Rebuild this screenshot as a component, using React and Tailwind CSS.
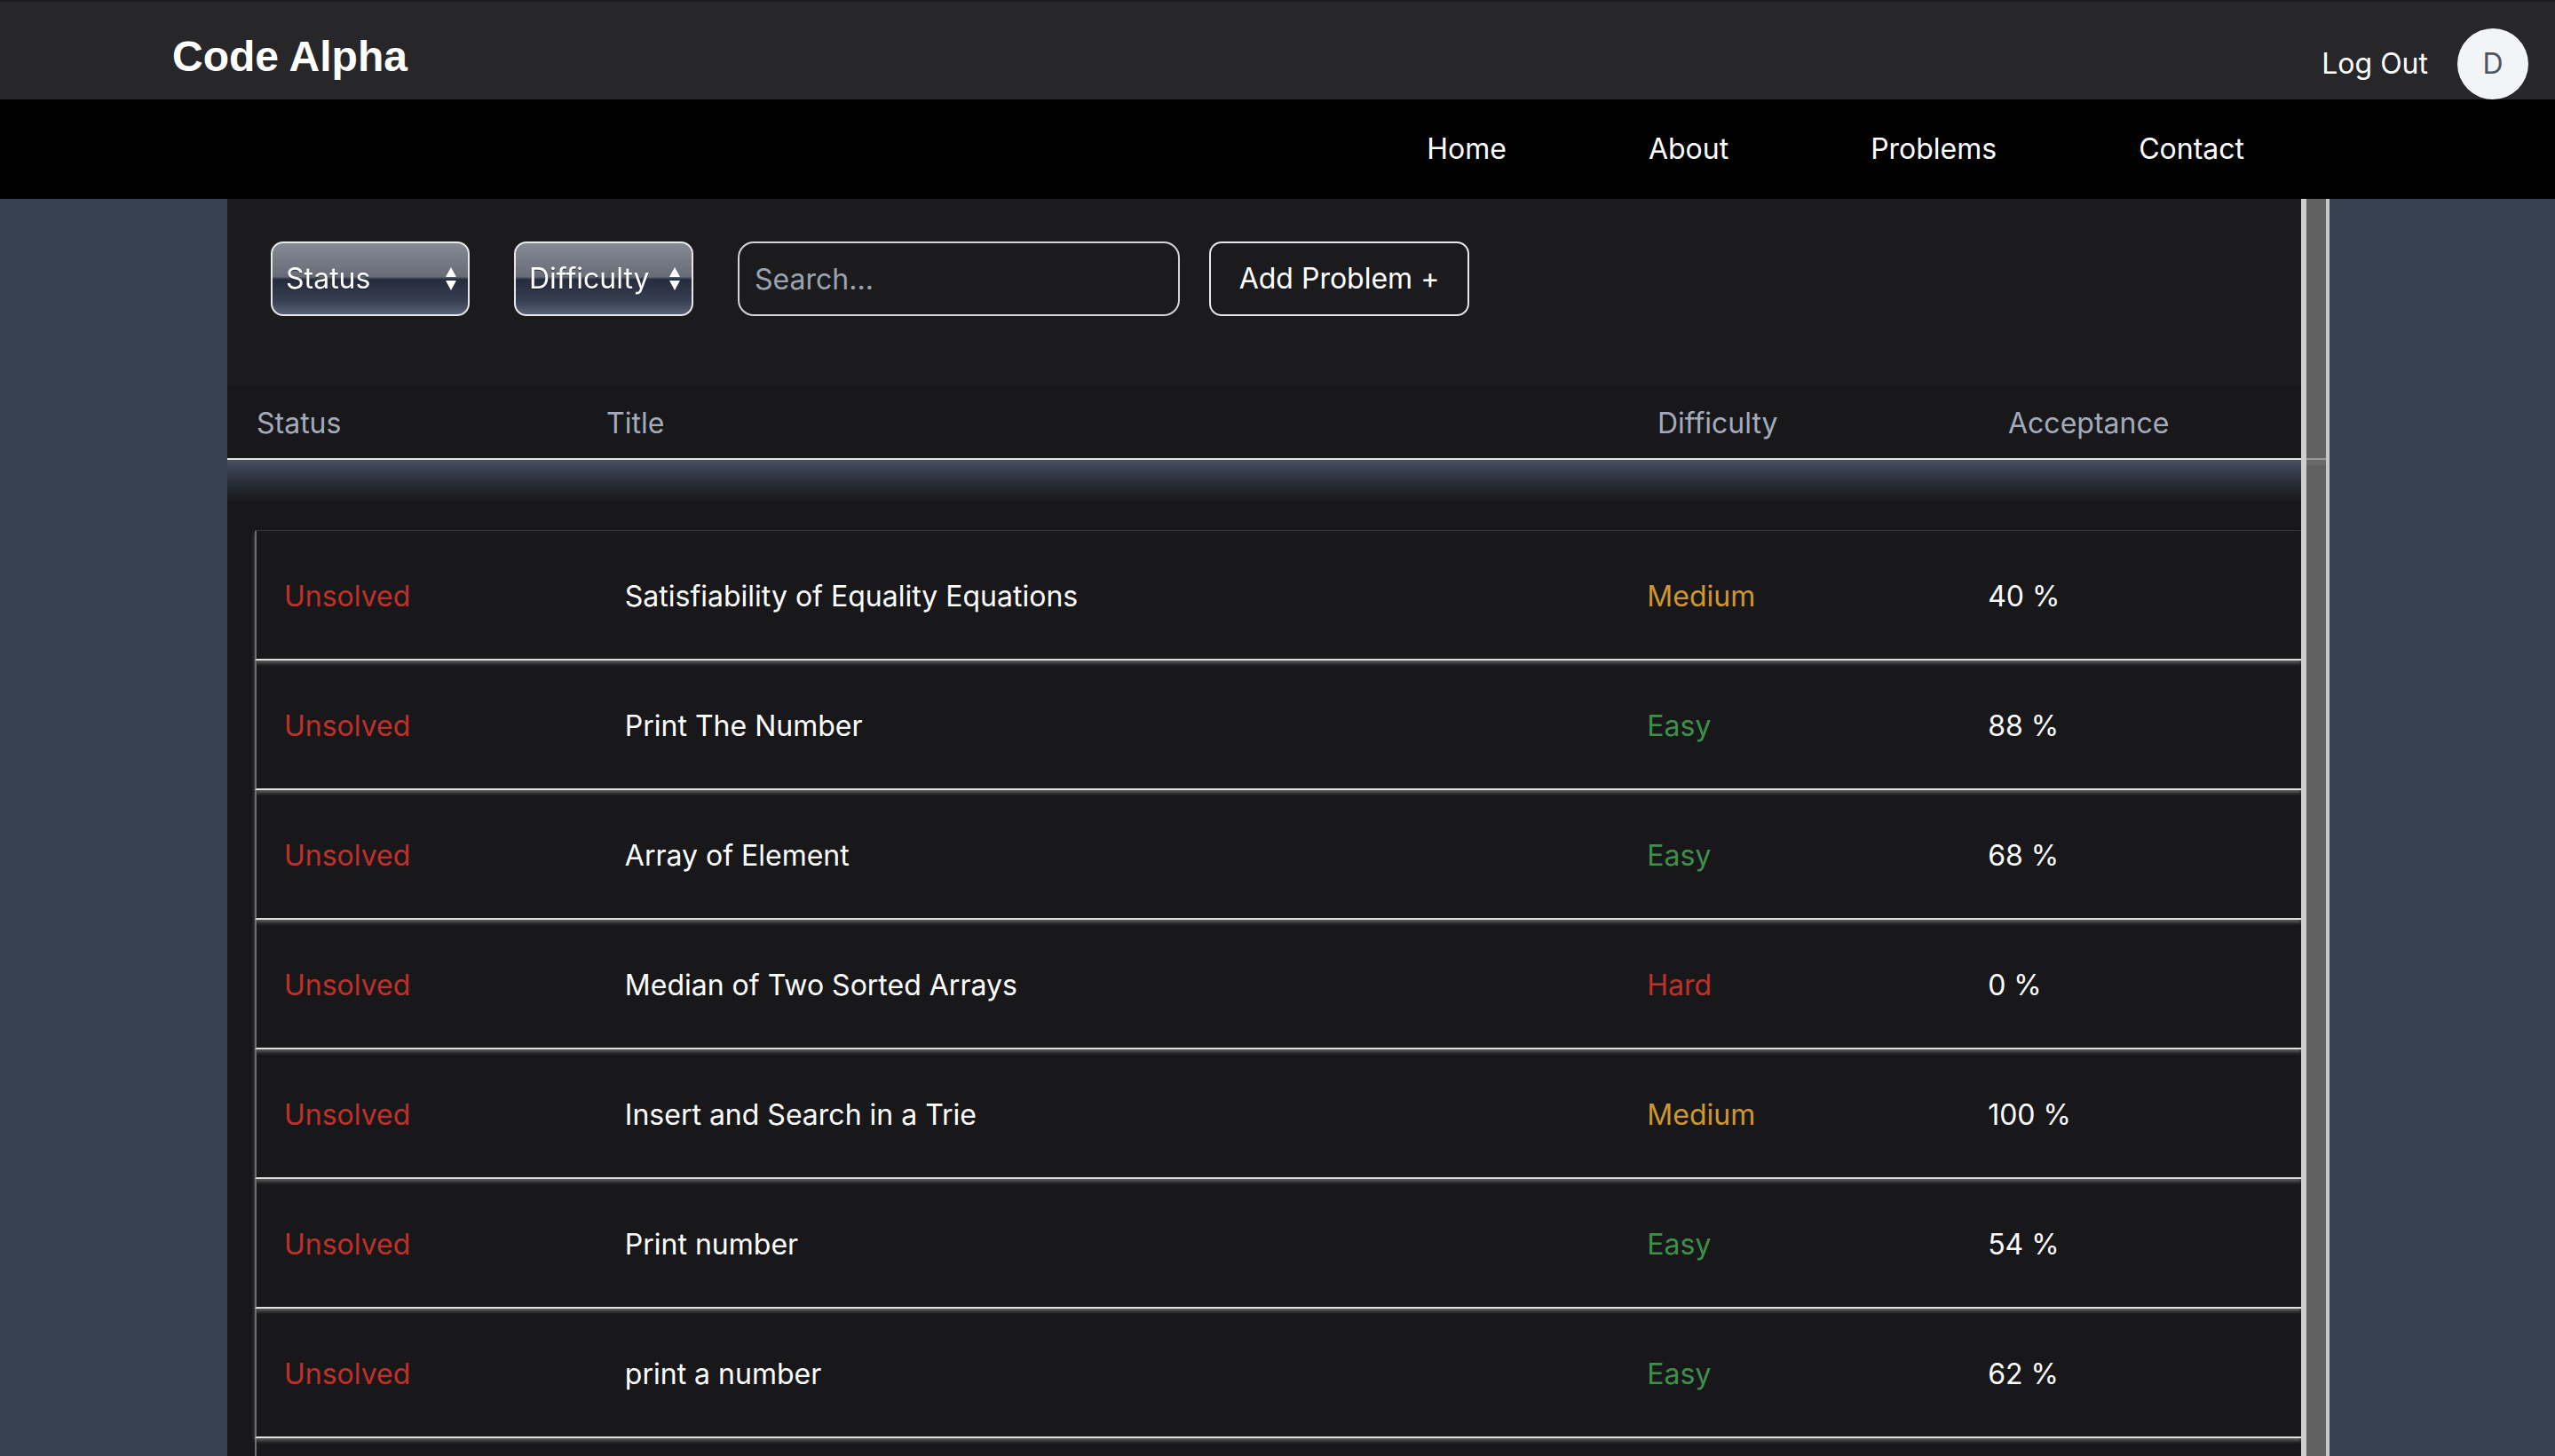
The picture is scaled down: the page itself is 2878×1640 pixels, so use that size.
import React from 'react';

const problems = [
  { title: 'Satisfiability of Equality Equations', difficulty: 'Medium', acceptance: 40 },
  { title: 'Print The Number', difficulty: 'Easy', acceptance: 88 },
  { title: 'Array of Element', difficulty: 'Easy', acceptance: 68 },
  { title: 'Median of Two Sorted Arrays', difficulty: 'Hard', acceptance: 0 },
  { title: 'Insert and Search in a Trie', difficulty: 'Medium', acceptance: 100 },
  { title: 'Print number', difficulty: 'Easy', acceptance: 54 },
  { title: 'print a number', difficulty: 'Easy', acceptance: 62 },
];

const difficultyColor = {
  Easy: 'text-[#3f8f4a]',
  Medium: 'text-[#d0962e]',
  Hard: 'text-[#c0302a]',
};

function Arrows() {
  return (
    <svg width="14" height="30" viewBox="0 0 14 30" fill="white">
      <path d="M7 2 L13 13 L1 13 Z" />
      <path d="M1 17 L13 17 L7 28 Z" />
    </svg>
  );
}

function FakeSelect({ label, width }) {
  return (
    <div
      className={`${width} h-[84px] shrink-0 rounded-[14px] border-2 border-[#e5e7eb] flex items-center justify-between pl-[15px] pr-[12px] text-white text-[32px] bg-[linear-gradient(to_bottom,#858a94_0%,#676c77_47%,#252c3d_51%,#363e51_80%,#5a6275_100%)]`}
    >
      <span className="drop-shadow-[0_1px_0_rgba(0,0,0,0.6)]">{label}</span>
      <Arrows />
    </div>
  );
}

export default function App() {
  return (
    <div className="h-[1640px] overflow-hidden bg-[#374151] font-['Inter','Noto_Sans',sans-serif]">
      {/* Top header */}
      <header className="h-[112px] bg-[#27272a] border-t-2 border-[#1c1c1e] flex justify-between">
        <div className="mt-[38px] pl-[194px] text-white text-[48px] leading-[48px] font-bold font-['Liberation_Sans',Arial,sans-serif]">
          Code Alpha
        </div>
        <div className="self-end flex items-center gap-[33px] pr-[30px]">
          <span className="text-white text-[32px]">Log Out</span>
          <div className="w-[80px] h-[80px] rounded-full bg-[#f3f4f6] text-[#4b5563] text-[32px] flex items-center justify-center">
            D
          </div>
        </div>
      </header>

      {/* Nav */}
      <nav className="h-[112px] bg-black flex items-center justify-end gap-[160px] pr-[350px] text-white text-[32px]">
        <span>Home</span>
        <span>About</span>
        <span>Problems</span>
        <span>Contact</span>
      </nav>

      {/* Main */}
      <div className="flex h-[1416px]">
        <div className="w-[256px] shrink-0" />

        <div className="w-[2336px] shrink-0 bg-[#18181b] flex flex-col">
          {/* Filters */}
          <div className="h-[210px] shrink-0 bg-[#1b1b1e] pl-[49px] pt-[48px] flex items-start">
            <FakeSelect label="Status" width="w-[224px]" />
            <div className="ml-[50px]">
              <FakeSelect label="Difficulty" width="w-[202px]" />
            </div>
            <input
              placeholder="Search..."
              className="ml-[50px] w-[498px] h-[84px] shrink-0 bg-transparent border-2 border-[#d4d4d8] rounded-[18px] px-[17px] text-[32px] text-white placeholder:text-[#9ca3af] outline-none"
            />
            <button className="ml-[33px] w-[293px] h-[84px] shrink-0 border-2 border-[#e5e7eb] rounded-[14px] text-white text-[32px]">
              Add Problem +
            </button>
          </div>

          {/* Table header */}
          <div className="h-[84px] shrink-0 pt-[3px] border-b-2 border-[#e5e5e5] grid grid-cols-[394px_1184px_395px_1fr] items-center text-[32px] text-[#a3abbb]">
            <div className="pl-[33px]">Status</div>
            <div className="pl-[33px]">Title</div>
            <div className="pl-[33px]">Difficulty</div>
            <div className="pl-[33px]">Acceptance</div>
          </div>

          <div className="h-[79px] shrink-0">
            <div className="h-[48px] bg-gradient-to-b from-[#485063] via-[#2a2f3a] to-[#18181b]" />
          </div>

          {/* Rows */}
          <div className="ml-[31px] border-t border-[#343438]">
            {problems.map((p, i) => (
              <div
                key={i}
                className="grid grid-cols-[1fr_3fr_1fr_1fr] h-[146px] pt-[3px] items-center border-b-2 border-b-[#e0e0e0] border-l-2 border-l-[#6e6e6e] shadow-[0_3px_4px_rgba(150,150,150,0.55)] text-[32px]"
              >
                <div className="pl-[31px] text-[#c0302a]">Unsolved</div>
                <div className="pl-[31px] text-white">{p.title}</div>
                <div className={`pl-[31px] ${difficultyColor[p.difficulty]}`}>{p.difficulty}</div>
                <div className="pl-[31px] text-white">{p.acceptance} %</div>
              </div>
            ))}
            <div className="h-[40px] border-l-2 border-l-[#6e6e6e]" />
          </div>
        </div>

        {/* Scrollbar track */}
        <div className="w-[32px] shrink-0 border-l-[6px] border-l-[#cfcfcf] border-r-4 border-r-[#c8c8c8] bg-[#616161] flex flex-col">
          <div className="h-[292px]" />
          <div className="h-[2px] bg-[#9a9a9a]" />
          <div className="h-[6px] bg-[#6a6a6a]" />
        </div>

        <div className="flex-1" />
      </div>
    </div>
  );
}
